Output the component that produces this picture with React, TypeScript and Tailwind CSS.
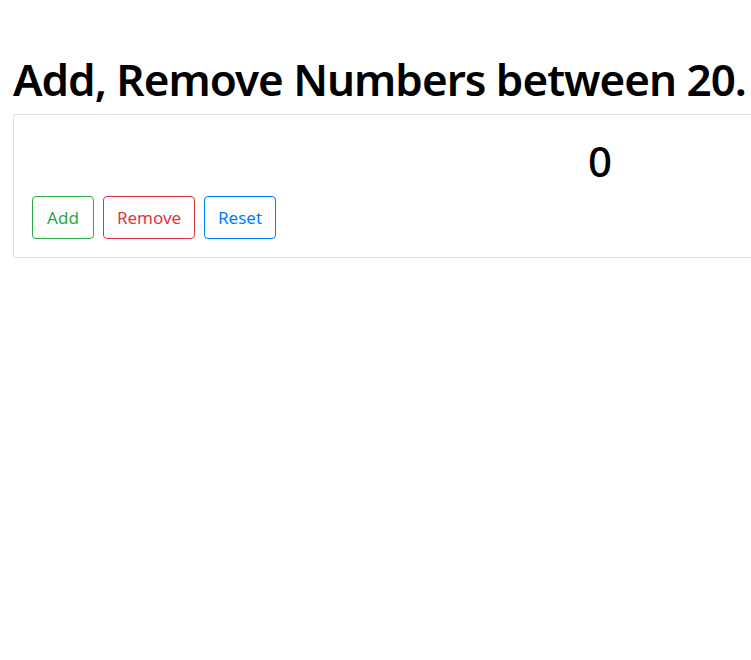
import React, { useState } from "react";

const App: React.FC = () => {
  const [count, setCount] = useState(0);

  return (
    <div
      className="min-h-screen w-full overflow-hidden bg-white text-black"
      style={{ fontFamily: '"Noto Sans", "Open Sans", sans-serif' }}
    >
      <div className="pl-[13px] pt-[52px]">
        <h1 className="whitespace-nowrap text-[44px] font-semibold tracking-[-1px] leading-[1.25] mb-[7px]">
          Add, Remove Numbers between 20.
        </h1>

        <div className="w-[1174px] border border-[#dfdfdf] rounded-[2px] px-[18px] pt-[21px] pb-[18px]">
          <h2 className="text-center text-[42px] font-medium leading-[1.2] mb-[10px]">
            {count}
          </h2>
          <div className="flex gap-[9px]">
            <button
              className="h-[43px] w-[62px] rounded-[4px] border border-[#28a745] text-[17px] text-[#28a745]"
              onClick={() => setCount((c) => Math.min(20, c + 1))}
            >
              Add
            </button>
            <button
              className="h-[43px] w-[92px] rounded-[4px] border border-[#dc3545] text-[17px] text-[#dc3545]"
              onClick={() => setCount((c) => Math.max(0, c - 1))}
            >
              Remove
            </button>
            <button
              className="h-[43px] w-[72px] rounded-[4px] border border-[#007bff] text-[17px] text-[#007bff]"
              onClick={() => setCount(0)}
            >
              Reset
            </button>
          </div>
        </div>
      </div>
    </div>
  );
};

export default App;
